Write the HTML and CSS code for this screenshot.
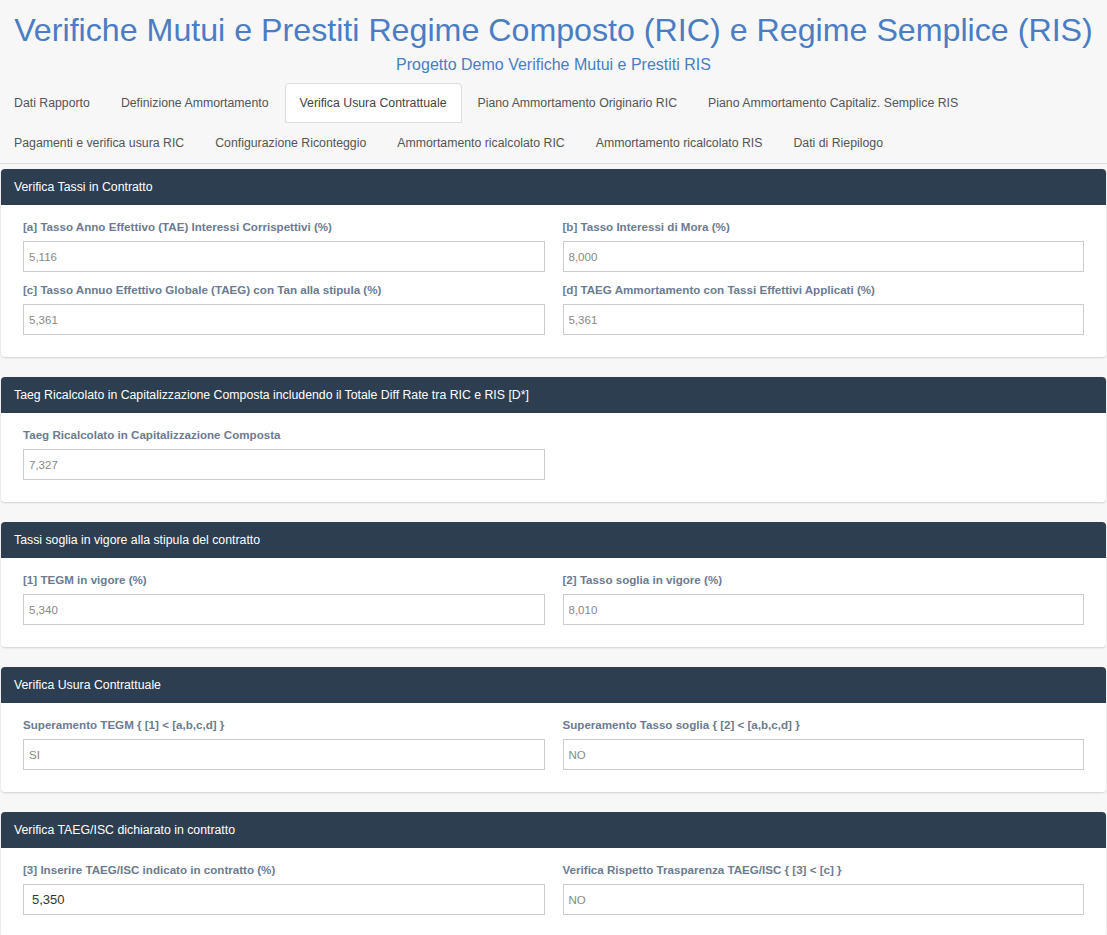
FILE: index.html
```html
<!DOCTYPE html>
<html lang="it">
<head>
  <meta charset="UTF-8" />
  <meta name="viewport" content="width=device-width, initial-scale=1.0"/>
  <title>Verifiche Mutui e Prestiti</title>
  <link rel="stylesheet" href="styles.css">
</head>
<body>

  <div class="header">
    <h1>Verifiche Mutui e Prestiti Regime Composto (RIC) e Regime Semplice (RIS)</h1>
    <div class="subtitle">Progetto Demo Verifiche Mutui e Prestiti RIS</div>
  </div>

  <ul class="nav-tabs">
    <li><a href="#">Dati Rapporto</a></li>
    <li><a href="#">Definizione Ammortamento</a></li>
    <li class="active"><a href="#">Verifica Usura Contrattuale</a></li>
    <li><a href="#">Piano Ammortamento Originario RIC</a></li>
    <li><a href="#">Piano Ammortamento Capitaliz. Semplice RIS</a></li>
    <li><a href="#">Pagamenti e verifica usura RIC</a></li>
    <li><a href="#">Configurazione Riconteggio</a></li>
    <li><a href="#">Ammortamento ricalcolato RIC</a></li>
    <li><a href="#">Ammortamento ricalcolato RIS</a></li>
    <li><a href="#">Dati di Riepilogo</a></li>
  </ul>

  <div class="content">

    <div class="panel">
      <div class="panel-heading">Verifica Tassi in Contratto</div>
      <div class="panel-body">
        <div class="form-group">
          <label>[a] Tasso Anno Effettivo (TAE) Interessi Corrispettivi (%)</label>
          <input type="text" class="form-control" value="5,116" readonly>
        </div>
        <div class="form-group">
          <label>[b] Tasso Interessi di Mora (%)</label>
          <input type="text" class="form-control" value="8,000" readonly>
        </div>
        <div class="form-group">
          <label>[c] Tasso Annuo Effettivo Globale (TAEG) con Tan alla stipula (%)</label>
          <input type="text" class="form-control" value="5,361" readonly>
        </div>
        <div class="form-group">
          <label>[d] TAEG Ammortamento con Tassi Effettivi Applicati (%)</label>
          <input type="text" class="form-control" value="5,361" readonly>
        </div>
      </div>
    </div>

    <div class="panel">
      <div class="panel-heading">Taeg Ricalcolato in Capitalizzazione Composta includendo il Totale Diff Rate tra RIC e RIS [D*]</div>
      <div class="panel-body">
        <div class="form-group">
          <label>Taeg Ricalcolato in Capitalizzazione Composta</label>
          <input type="text" class="form-control" value="7,327" readonly>
        </div>
      </div>
    </div>

    <div class="panel">
      <div class="panel-heading">Tassi soglia in vigore alla stipula del contratto</div>
      <div class="panel-body">
        <div class="form-group">
          <label>[1] TEGM in vigore (%)</label>
          <input type="text" class="form-control" value="5,340" readonly>
        </div>
        <div class="form-group">
          <label>[2] Tasso soglia in vigore (%)</label>
          <input type="text" class="form-control" value="8,010" readonly>
        </div>
      </div>
    </div>

    <div class="panel">
      <div class="panel-heading">Verifica Usura Contrattuale</div>
      <div class="panel-body">
        <div class="form-group">
          <label>Superamento TEGM { [1] &lt; [a,b,c,d] }</label>
          <input type="text" class="form-control" value="SI" readonly>
        </div>
        <div class="form-group">
          <label>Superamento Tasso soglia { [2] &lt; [a,b,c,d] }</label>
          <input type="text" class="form-control" value="NO" readonly>
        </div>
      </div>
    </div>

    <div class="panel">
      <div class="panel-heading">Verifica TAEG/ISC dichiarato in contratto</div>
      <div class="panel-body">
        <div class="form-group">
          <label>[3] Inserire TAEG/ISC indicato in contratto (%)</label>
          <input type="text" class="form-control editable" value="5,350">
        </div>
        <div class="form-group">
          <label>Verifica Rispetto Trasparenza TAEG/ISC { [3] &lt; [c] }</label>
          <input type="text" class="form-control" value="NO" readonly>
        </div>
      </div>
    </div>

  </div>

</body>
</html>
```

FILE: styles.css
```css
* {
  box-sizing: border-box;
}

body {
  font-family: "Liberation Sans", Arial, sans-serif;
  margin: 0;
  background-color: #f7f7f7;
  color: #555;
}

.header {
  text-align: center;
  padding-top: 8px;
}

.header h1 {
  margin: 0;
  font-size: 32.2px;
  font-weight: normal;
  line-height: 44px;
  color: #4a7dc3;
}

.subtitle {
  margin-top: 3px;
  font-size: 16px;
  line-height: 20px;
  color: #4a7dc3;
}

/* Tabs */
.nav-tabs {
  display: flex;
  flex-wrap: wrap;
  list-style: none;
  margin: 8px 0 0;
  padding: 0;
  border-bottom: 1px solid #ddd;
}

.nav-tabs li {
  margin-right: 1px;
}

.nav-tabs a {
  display: block;
  padding: 9px 15px 9px 14px;
  font-size: 12.3px;
  line-height: 20px;
  color: #555;
  text-decoration: none;
  border: 1px solid transparent;
  border-radius: 4px 4px 0 0;
  margin-left: -1px;
}

.nav-tabs li.active a {
  background-color: #fff;
  border-color: #ddd;
  color: #444;
}

/* Panels */
.content {
  padding: 5px 1px 0;
}

.panel {
  background-color: #fff;
  border-radius: 4px;
  box-shadow: 0 1px 2px rgba(0, 0, 0, 0.15);
  margin-bottom: 20px;
  overflow: hidden;
}

.panel-heading {
  background-color: #2c3e50;
  color: #fff;
  font-size: 12.3px;
  line-height: 20px;
  padding: 8px 14px 8px 13px;
}

.panel-body {
  display: grid;
  grid-template-columns: 1fr 1fr;
  column-gap: 18px;
  padding: 14px 22px 12px;
}

.form-group {
  margin-bottom: 10px;
}

.form-group label {
  display: block;
  font-size: 11.6px;
  font-weight: bold;
  line-height: 16px;
  color: #6c7b91;
  margin-bottom: 6px;
}

.form-control {
  display: block;
  width: 100%;
  height: 31px;
  padding: 4px 5px;
  font-family: "Liberation Sans", Arial, sans-serif;
  font-size: 11.5px;
  color: #888;
  background-color: #fff;
  border: 1px solid #ccc;
  border-radius: 0;
  outline: none;
}

.form-control.editable {
  font-size: 13px;
  color: #333;
  padding-left: 8px;
}
```
